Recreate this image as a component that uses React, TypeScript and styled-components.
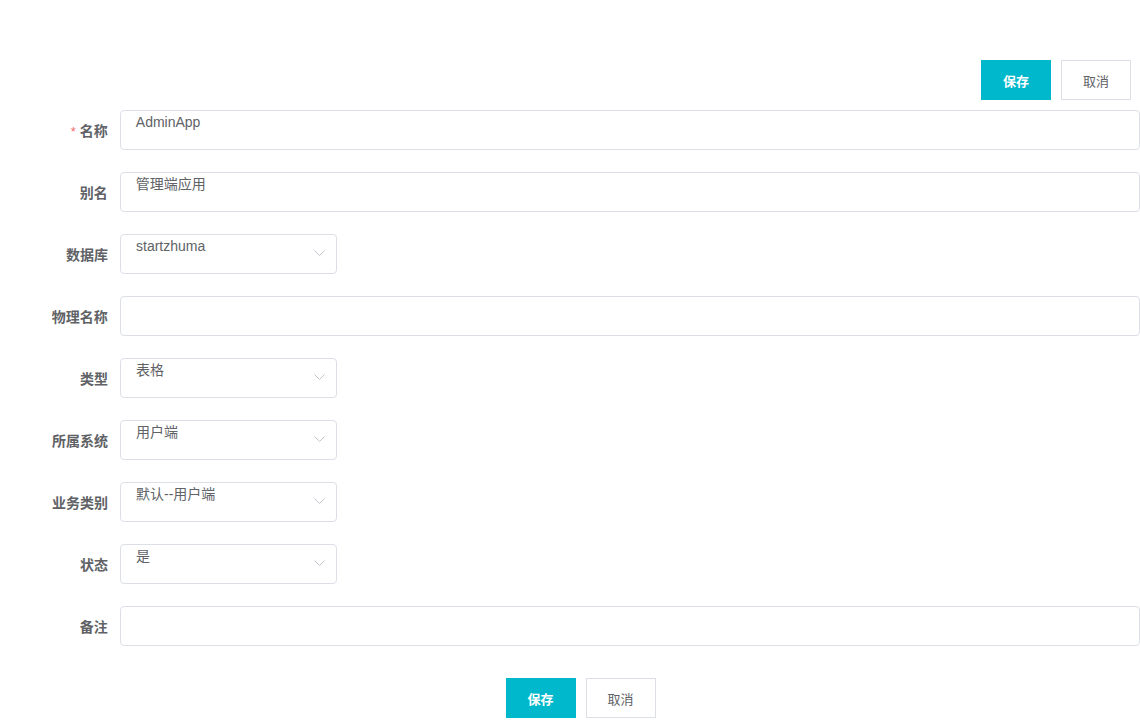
import React from "react";
import styled, { createGlobalStyle } from "styled-components";

const GlobalStyle = createGlobalStyle`
  html, body {
    margin: 0;
    padding: 0;
    background: #fff;
    font-family: "Liberation Sans", Arial, "Noto Sans CJK SC", sans-serif;
  }
  #root {
    width: 1140px;
    overflow: hidden;
  }
`;

type Field = {
  label: string;
  value?: string;
  required?: boolean;
  select?: boolean;
};

const fields: Field[] = [
  { label: "名称", value: "AdminApp", required: true },
  { label: "别名", value: "管理端应用" },
  { label: "数据库", value: "startzhuma", select: true },
  { label: "物理名称", value: "" },
  { label: "类型", value: "表格", select: true },
  { label: "所属系统", value: "用户端", select: true },
  { label: "业务类别", value: "默认--用户端", select: true },
  { label: "状态", value: "是", select: true },
  { label: "备注", value: "" },
];

const Page = styled.div`
  padding-top: 60px;
`;

const Toolbar = styled.div<{ $center?: boolean }>`
  display: flex;
  gap: 10px;
  justify-content: ${(p) => (p.$center ? "center" : "flex-end")};
  padding: ${(p) => (p.$center ? "0 0 0 21px" : "0 9px 0 0")};
  margin-bottom: ${(p) => (p.$center ? "0" : "10px")};
`;

const Button = styled.button<{ $primary?: boolean }>`
  width: 70px;
  height: 40px;
  box-sizing: border-box;
  border: 1px solid ${(p) => (p.$primary ? "#00b8cb" : "#dcdfe6")};
  background: ${(p) => (p.$primary ? "#00b8cb" : "#fff")};
  color: ${(p) => (p.$primary ? "#fff" : "#606266")};
  font-family: inherit;
  font-size: 13px;
  font-weight: ${(p) => (p.$primary ? 700 : 400)};
  cursor: pointer;
  padding: 0;
`;

const Form = styled.div`
  display: flex;
  flex-direction: column;
  gap: 22px;
  margin-bottom: 32px;
`;

const Row = styled.div`
  display: flex;
  align-items: center;
  height: 40px;
`;

const Label = styled.label`
  width: 120px;
  box-sizing: border-box;
  padding-right: 12px;
  text-align: right;
  font-size: 14px;
  font-weight: 700;
  color: #606266;
`;

const Star = styled.span`
  color: #f56c6c;
  margin-right: 4px;
  font-size: 13px;
  font-weight: 400;
`;

const Input = styled.div<{ $select?: boolean }>`
  position: relative;
  box-sizing: border-box;
  height: 40px;
  width: ${(p) => (p.$select ? "217px" : "1022px")};
  border: 1px solid #dcdfe6;
  border-radius: 4px;
  padding: 0 15px;
  font-size: 14px;
  line-height: 22px;
  color: #606266;
`;

const Arrow = styled.svg`
  position: absolute;
  right: 11px;
  top: 15px;
  width: 11px;
  height: 6px;
`;

const Chevron = () => (
  <Arrow viewBox="0 0 11 6" fill="none" stroke="#c0c4cc" strokeWidth="1">
    <path d="M0.5 0.5L5.5 5.5L10.5 0.5" />
  </Arrow>
);

export default function App() {
  return (
    <Page>
      <GlobalStyle />
      <Toolbar>
        <Button $primary>保存</Button>
        <Button>取消</Button>
      </Toolbar>
      <Form>
        {fields.map((f) => (
          <Row key={f.label}>
            <Label>
              {f.required && <Star>*</Star>}
              {f.label}
            </Label>
            <Input $select={f.select}>
              {f.value}
              {f.select && <Chevron />}
            </Input>
          </Row>
        ))}
      </Form>
      <Toolbar $center>
        <Button $primary>保存</Button>
        <Button>取消</Button>
      </Toolbar>
    </Page>
  );
}
